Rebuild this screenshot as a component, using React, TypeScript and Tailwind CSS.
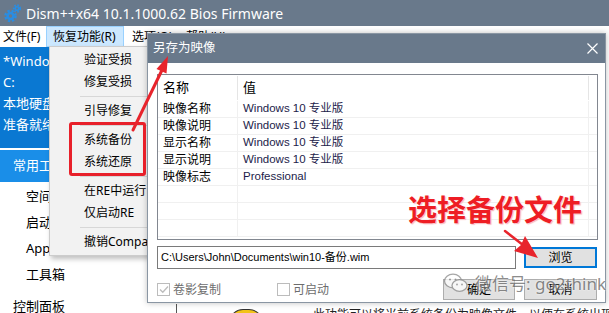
import React from 'react';

const FONT = "font-['Noto_Sans','Noto_Sans_CJK_SC',sans-serif]";

const rows: [string, string][] = [
  ['映像名称', 'Windows 10 专业版'],
  ['映像说明', 'Windows 10 专业版'],
  ['显示名称', 'Windows 10 专业版'],
  ['显示说明', 'Windows 10 专业版'],
  ['映像标志', 'Professional'],
  ['', ''],
  ['', ''],
  ['', ''],
];

function GearIcon() {
  return (
    <svg width="17" height="20" viewBox="0 0 17 20">
      {/* big gear */}
      <circle cx="6.5" cy="13" r="5" fill="none" stroke="#2a8de2" strokeWidth="2.6" strokeDasharray="2.2 1.8" />
      <circle cx="6.5" cy="13" r="4.2" fill="#2a8de2" />
      <circle cx="6.5" cy="13" r="1.7" fill="#69798b" />
      {/* small gear */}
      <circle cx="13" cy="5.5" r="3.2" fill="none" stroke="#2a8de2" strokeWidth="2" strokeDasharray="1.6 1.4" />
      <circle cx="13" cy="5.5" r="2.6" fill="#2a8de2" />
      <circle cx="13" cy="5.5" r="1" fill="#69798b" />
    </svg>
  );
}

function Checkbox({ checked }: { checked?: boolean }) {
  return (
    <div className="w-[13px] h-[13px] border border-[#bcbcbc] bg-white flex items-center justify-center">
      {checked && (
        <svg width="10" height="9" viewBox="0 0 10 9">
          <path d="M1 4.5 L3.8 7.3 L9 1.5" fill="none" stroke="#bcbcbc" strokeWidth="1.3" />
        </svg>
      )}
    </div>
  );
}

function RestoreMenu() {
  const Item = ({ label }: { label: string }) => (
    <div className="h-[22px] flex items-center pl-[34px] text-[12px] text-black whitespace-nowrap">{label}</div>
  );
  const Sep = () => (
    <div className="h-[7px] flex items-center ml-[30px]">
      <div className="h-px w-full bg-[#d7d7d7]" />
    </div>
  );
  return (
    <div className="absolute left-[49px] top-[46px] w-[112px] bg-[#f2f2f2] border border-[#cccccc] py-[2px] shadow-[2px_3px_5px_rgba(0,0,0,0.25)]">
      <Item label="验证受损" />
      <Item label="修复受损" />
      <Sep />
      <Item label="引导修复" />
      <Sep />
      <Item label="系统备份" />
      <Item label="系统还原" />
      <Sep />
      <Item label="在RE中运行" />
      <Item label="仅启动RE" />
      <Sep />
      <Item label="撤销CompactOS" />
    </div>
  );
}

function SaveImageDialog() {
  return (
    <div className="absolute left-[147px] top-[33px] w-[459px] h-[270px] bg-white border border-[#8a96a3] flex flex-col shadow-[0_0_6px_rgba(0,0,0,0.25)]">
      {/* Title */}
      <div className="h-[29px] shrink-0 bg-[#69798b] flex items-center justify-between pl-[5px] pr-[7px]">
        <span className="text-white text-[12.5px]">另存为映像</span>
        <svg width="11" height="11" viewBox="0 0 11 11">
          <path d="M0.5 0.5 L10.5 10.5 M10.5 0.5 L0.5 10.5" stroke="#ffffff" strokeWidth="1.2" />
        </svg>
      </div>

      <div className="flex flex-col pl-[9px] pt-[11px]">
        {/* Properties table */}
        <div className="w-[441px] h-[166px] border border-[#828790] flex flex-col overflow-hidden">
          <div className="h-[26px] shrink-0 flex items-center">
            <div className="w-[80px] h-[24px] pl-[5px] flex items-center border-r border-[#e5e5e5] text-[13px] text-black">名称</div>
            <div className="w-[351px] h-[24px] pl-[5px] flex items-center border-r border-[#e5e5e5] text-[13px] text-black">值</div>
          </div>
          {rows.map(([name, value], i) => (
            <div key={i} className="h-[17px] shrink-0 flex border-b border-[#f0f0f0]">
              <div className="w-[80px] pl-[5px] flex items-center border-r border-[#f0f0f0] text-[12px] text-black whitespace-nowrap">{name}</div>
              <div className="w-[351px] pl-[5px] flex items-center border-r border-[#f0f0f0] text-[11.5px] text-[#1c1c4a] whitespace-nowrap font-['Liberation_Sans','Noto_Sans_CJK_SC',sans-serif]">{value}</div>
              <div className="flex-1" />
            </div>
          ))}
        </div>

        {/* Path */}
        <div className="mt-[6px] h-[23px] flex gap-[8px]">
          <div className="w-[359px] h-[23px] border border-[#7a7a7a] flex items-center pl-[3px] text-[11px] text-black whitespace-nowrap font-['Liberation_Sans','Noto_Sans_CJK_SC',sans-serif]">
            C:\Users\John\Documents\win10-备份.wim
          </div>
          <div className="w-[73px] h-[21px] mt-[1px] border-2 border-[#0078d7] bg-[#e1e1e1] flex items-center justify-center text-[12px] text-black">浏览</div>
        </div>

        {/* Bottom row */}
        <div className="mt-[10px] h-[21px] flex items-center">
          <div className="w-[120px] flex items-center gap-[3px]">
            <Checkbox checked />
            <span className="text-[12px] text-[#6d6d6d]">卷影复制</span>
          </div>
          <div className="w-[166px] flex items-center gap-[3px]">
            <Checkbox />
            <span className="text-[12px] text-[#6d6d6d]">可启动</span>
          </div>
          <div className="w-[72px] h-[21px] border border-[#adadad] bg-[#e1e1e1] flex items-center justify-center text-[12px] text-black">确定</div>
          <div className="w-[73px] h-[21px] ml-[9px] border border-[#adadad] bg-[#e1e1e1] flex items-center justify-center text-[12px] text-black">取消</div>
        </div>
      </div>
    </div>
  );
}

function Annotations() {
  return (
    <>
      <div className="absolute left-[69px] top-[122px] w-[77px] h-[54px] border-[3px] border-[#e8202a] rounded-[3px]" />
      <svg className="absolute left-0 top-0 pointer-events-none" width="609" height="313" viewBox="0 0 609 313">
        <line x1="133" y1="130" x2="163" y2="68" stroke="#e8242c" strokeWidth="3" strokeLinecap="round" />
        <polygon points="168,56 156.5,69 166.5,73.5" fill="#e8242c" />
        <line x1="505" y1="231" x2="523" y2="245" stroke="#e8242c" strokeWidth="2.5" strokeLinecap="round" />
        <polygon points="538,258 514,251 521,245 525,236" fill="#e8242c" />
      </svg>
      <div className="absolute left-[408px] top-[195px] text-[29px] leading-none font-bold text-[#ee1d24] whitespace-nowrap [text-shadow:0_0_2px_#ffffff,1px_1px_1px_#f7a8b0]">
        选择备份文件
      </div>
      {/* watermark */}
      <div className="absolute left-[443px] top-[273px] flex items-center gap-[6px] opacity-75">
        <svg width="26" height="20" viewBox="0 0 26 20">
          <ellipse cx="10" cy="8" rx="8.5" ry="6.8" fill="#ffffff" stroke="#8a8a8a" strokeWidth="1.3" />
          <ellipse cx="16.5" cy="12.5" rx="7.5" ry="5.8" fill="#ffffff" stroke="#8a8a8a" strokeWidth="1.3" />
          <circle cx="7" cy="6.5" r="1" fill="#8a8a8a" />
          <circle cx="12.5" cy="6.5" r="1" fill="#8a8a8a" />
          <circle cx="14" cy="11.5" r="0.9" fill="#8a8a8a" />
          <circle cx="19" cy="11.5" r="0.9" fill="#8a8a8a" />
        </svg>
        <span className="text-[17px] leading-none text-[#666666] whitespace-nowrap [text-shadow:0_0_2px_#ffffff,0_0_2px_#ffffff]">微信号: go2think</span>
      </div>
    </>
  );
}

export default function App() {
  return (
    <div className={`relative w-[609px] h-[313px] overflow-hidden bg-white ${FONT}`}>
      {/* Title bar */}
      <div className="h-[26px] bg-[#69798b] flex items-center pl-[4px] gap-[5px]">
        <GearIcon />
        <span className="text-white text-[14px] whitespace-nowrap">Dism++x64 10.1.1000.62 Bios Firmware</span>
      </div>

      {/* Menu bar */}
      <div className="h-[21px] flex items-stretch text-[12px] text-black">
        <div className="w-[46px] pl-[3px] flex items-center">文件(F)</div>
        <div className="w-[78px] pl-[6px] flex items-center bg-[#cce8ff] border border-[#99d1ff]">恢复功能(R)</div>
        <div className="pl-[8px] w-[62px] flex items-center">选项(O)</div>
        <div className="flex items-center">帮助(H)</div>
      </div>

      {/* Body */}
      <div className="h-[266px] flex overflow-hidden">
        <div className="w-[150px] shrink-0 flex flex-col">
          <div className="h-[101px] shrink-0 bg-[#0a78d2] pt-[4px] pl-[3px] text-[13px] leading-[21px] text-white whitespace-nowrap overflow-hidden">
            <div>*Windows 10 专业版</div>
            <div>C:</div>
            <div>本地硬盘</div>
            <div>准备就绪</div>
          </div>
          <div className="h-[32px] shrink-0 mt-[2px] bg-[#1a8ee8] pl-[13px] flex items-center text-[13px] text-white">常用工具</div>
          <div className="mt-[2px] shrink-0 flex flex-col text-[13px] text-black">
            <div className="h-[26px] shrink-0 pl-[26px] flex items-center">空间回收</div>
            <div className="h-[26px] shrink-0 pl-[26px] flex items-center">启动项管理</div>
            <div className="h-[26px] shrink-0 pl-[26px] flex items-center">Appx管理</div>
            <div className="h-[26px] shrink-0 pl-[26px] flex items-center">工具箱</div>
            <div className="h-[38px] shrink-0 pl-[13px] flex items-center">控制面板</div>
          </div>
        </div>
        <div className="flex-1 flex flex-col justify-end">
          <div className="h-[20px] mb-[-11px] flex items-start">
            <div className="w-[26px]" />
            <div className="w-px h-full bg-[#555555]" />
            <div className="w-[52px]" />
            <div className="w-[34px] h-[14px] mt-[5px] bg-[#f2c318] border border-[#333] rounded-t-full" />
            <div className="ml-[50px] mt-[2px] text-[12px] text-[#222] whitespace-nowrap">此功能可以将当前系统备份为映像文件，以便在系统出现问题时进行恢复</div>
          </div>
        </div>
        <div className="w-[3px] bg-[#333333]" />
      </div>

      <RestoreMenu />
      <SaveImageDialog />
      <Annotations />
    </div>
  );
}
